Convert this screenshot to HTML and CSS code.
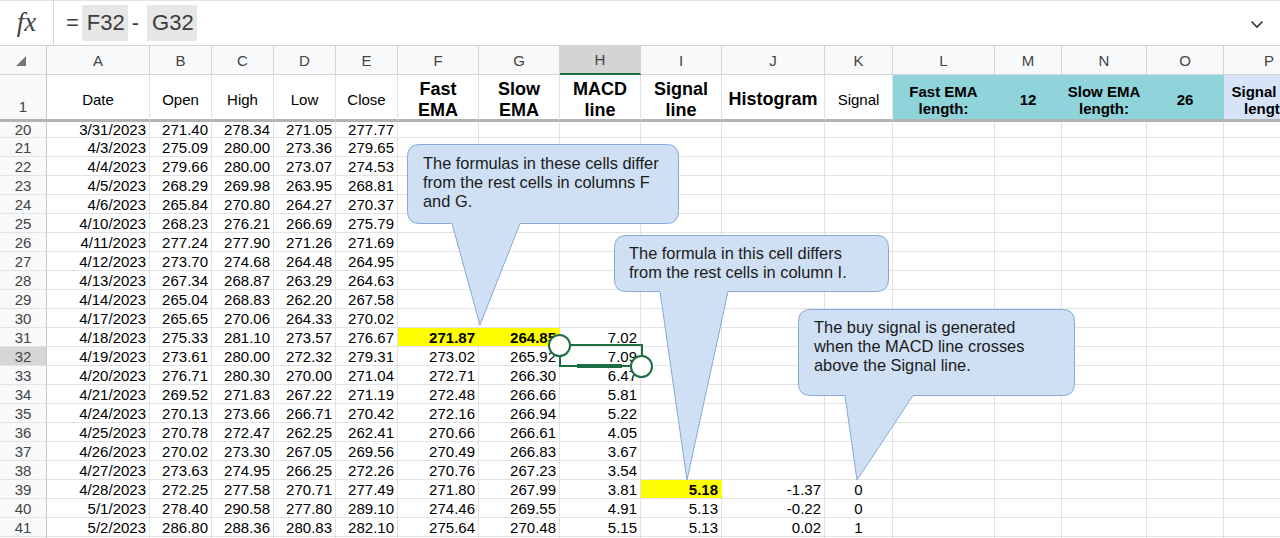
FILE: index.html
```html
<!DOCTYPE html>
<html>
<head>
<meta charset="utf-8">
<link rel="stylesheet" href="styles.css">
</head>
<body>
<div class="fbar">
  <div class="fx">fx</div>
  <div class="formula">
    <span class="eq">=</span><span class="ref">F32</span><span class="op">-</span><span class="ref">G32</span>
  </div>
  <svg class="chev" width="14" height="9" viewBox="0 0 14 9"><polyline points="1.5,1.5 7,7 12.5,1.5" fill="none" stroke="#333" stroke-width="1.6"/></svg>
</div>

<div class="sheet">
  <div class="r hdr"><span class="rn corner"><svg width="10" height="10" viewBox="0 0 10 10"><polygon points="10,0 10,10 0,10" fill="#777"/></svg></span><span>A</span><span>B</span><span>C</span><span>D</span><span>E</span><span>F</span><span>G</span><span class="on">H</span><span>I</span><span>J</span><span>K</span><span>L</span><span>M</span><span>N</span><span>O</span><span>P</span></div>
  <div class="r row1"><span class="rn">1</span><span>Date</span><span>Open</span><span>High</span><span>Low</span><span>Close</span><span class="big">Fast<br>EMA</span><span class="big">Slow<br>EMA</span><span class="big">MACD<br>line</span><span class="big">Signal<br>line</span><span class="big">Histogram</span><span>Signal</span><span class="param teal">Fast EMA<br>length:</span><span class="param teal">12</span><span class="param teal">Slow EMA<br>length:</span><span class="param teal">26</span><span class="param blue">Signal line<br>length:</span></div>
  <div class="r r20"><span class="rn">20</span><span>3/31/2023</span><span>271.40</span><span>278.34</span><span>271.05</span><span>277.77</span><span></span><span></span><span></span><span></span><span></span><span></span><span></span><span></span><span></span><span></span><span></span></div>
  <div class="r"><span class="rn">21</span><span>4/3/2023</span><span>275.09</span><span>280.00</span><span>273.36</span><span>279.65</span><span></span><span></span><span></span><span></span><span></span><span></span><span></span><span></span><span></span><span></span><span></span></div>
  <div class="r"><span class="rn">22</span><span>4/4/2023</span><span>279.66</span><span>280.00</span><span>273.07</span><span>274.53</span><span></span><span></span><span></span><span></span><span></span><span></span><span></span><span></span><span></span><span></span><span></span></div>
  <div class="r"><span class="rn">23</span><span>4/5/2023</span><span>268.29</span><span>269.98</span><span>263.95</span><span>268.81</span><span></span><span></span><span></span><span></span><span></span><span></span><span></span><span></span><span></span><span></span><span></span></div>
  <div class="r"><span class="rn">24</span><span>4/6/2023</span><span>265.84</span><span>270.80</span><span>264.27</span><span>270.37</span><span></span><span></span><span></span><span></span><span></span><span></span><span></span><span></span><span></span><span></span><span></span></div>
  <div class="r"><span class="rn">25</span><span>4/10/2023</span><span>268.23</span><span>276.21</span><span>266.69</span><span>275.79</span><span></span><span></span><span></span><span></span><span></span><span></span><span></span><span></span><span></span><span></span><span></span></div>
  <div class="r"><span class="rn">26</span><span>4/11/2023</span><span>277.24</span><span>277.90</span><span>271.26</span><span>271.69</span><span></span><span></span><span></span><span></span><span></span><span></span><span></span><span></span><span></span><span></span><span></span></div>
  <div class="r"><span class="rn">27</span><span>4/12/2023</span><span>273.70</span><span>274.68</span><span>264.48</span><span>264.95</span><span></span><span></span><span></span><span></span><span></span><span></span><span></span><span></span><span></span><span></span><span></span></div>
  <div class="r"><span class="rn">28</span><span>4/13/2023</span><span>267.34</span><span>268.87</span><span>263.29</span><span>264.63</span><span></span><span></span><span></span><span></span><span></span><span></span><span></span><span></span><span></span><span></span><span></span></div>
  <div class="r"><span class="rn">29</span><span>4/14/2023</span><span>265.04</span><span>268.83</span><span>262.20</span><span>267.58</span><span></span><span></span><span></span><span></span><span></span><span></span><span></span><span></span><span></span><span></span><span></span></div>
  <div class="r"><span class="rn">30</span><span>4/17/2023</span><span>265.65</span><span>270.06</span><span>264.33</span><span>270.02</span><span></span><span></span><span></span><span></span><span></span><span></span><span></span><span></span><span></span><span></span><span></span></div>
  <div class="r"><span class="rn">31</span><span>4/18/2023</span><span>275.33</span><span>281.10</span><span>273.57</span><span>276.67</span><span class="yl">271.87</span><span class="yl">264.85</span><span>7.02</span><span></span><span></span><span></span><span></span><span></span><span></span><span></span><span></span></div>
  <div class="r"><span class="rn on">32</span><span>4/19/2023</span><span>273.61</span><span>280.00</span><span>272.32</span><span>279.31</span><span>273.02</span><span>265.92</span><span>7.09</span><span></span><span></span><span></span><span></span><span></span><span></span><span></span><span></span></div>
  <div class="r"><span class="rn">33</span><span>4/20/2023</span><span>276.71</span><span>280.30</span><span>270.00</span><span>271.04</span><span>272.71</span><span>266.30</span><span>6.47</span><span></span><span></span><span></span><span></span><span></span><span></span><span></span><span></span></div>
  <div class="r"><span class="rn">34</span><span>4/21/2023</span><span>269.52</span><span>271.83</span><span>267.22</span><span>271.19</span><span>272.48</span><span>266.66</span><span>5.81</span><span></span><span></span><span></span><span></span><span></span><span></span><span></span><span></span></div>
  <div class="r"><span class="rn">35</span><span>4/24/2023</span><span>270.13</span><span>273.66</span><span>266.71</span><span>270.42</span><span>272.16</span><span>266.94</span><span>5.22</span><span></span><span></span><span></span><span></span><span></span><span></span><span></span><span></span></div>
  <div class="r"><span class="rn">36</span><span>4/25/2023</span><span>270.78</span><span>272.47</span><span>262.25</span><span>262.41</span><span>270.66</span><span>266.61</span><span>4.05</span><span></span><span></span><span></span><span></span><span></span><span></span><span></span><span></span></div>
  <div class="r"><span class="rn">37</span><span>4/26/2023</span><span>270.02</span><span>273.30</span><span>267.05</span><span>269.56</span><span>270.49</span><span>266.83</span><span>3.67</span><span></span><span></span><span></span><span></span><span></span><span></span><span></span><span></span></div>
  <div class="r"><span class="rn">38</span><span>4/27/2023</span><span>273.63</span><span>274.95</span><span>266.25</span><span>272.26</span><span>270.76</span><span>267.23</span><span>3.54</span><span></span><span></span><span></span><span></span><span></span><span></span><span></span><span></span></div>
  <div class="r"><span class="rn">39</span><span>4/28/2023</span><span>272.25</span><span>277.58</span><span>270.71</span><span>277.49</span><span>271.80</span><span>267.99</span><span>3.81</span><span class="yl">5.18</span><span>-1.37</span><span class="ctr">0</span><span></span><span></span><span></span><span></span><span></span></div>
  <div class="r"><span class="rn">40</span><span>5/1/2023</span><span>278.40</span><span>290.58</span><span>277.80</span><span>289.10</span><span>274.46</span><span>269.55</span><span>4.91</span><span>5.13</span><span>-0.22</span><span class="ctr">0</span><span></span><span></span><span></span><span></span><span></span></div>
  <div class="r"><span class="rn">41</span><span>5/2/2023</span><span>286.80</span><span>288.36</span><span>280.83</span><span>282.10</span><span>275.64</span><span>270.48</span><span>5.15</span><span>5.13</span><span>0.02</span><span class="ctr">1</span><span></span><span></span><span></span><span></span><span></span></div>
  <div class="r"><span class="rn"></span><span></span><span></span><span></span><span></span><span></span><span></span><span></span><span></span><span></span><span></span><span></span><span></span><span></span><span></span><span></span><span></span></div>
</div>

<div class="selection"></div>
<div class="sel-bar"></div>
<div class="handle h1"></div>
<div class="handle h2"></div>

<svg class="bubbles" width="1280" height="538" viewBox="0 0 1280 538">
  <path d="M419.5 144.5 H666.5 Q678.5 144.5 678.5 156.5 V211.5 Q678.5 223.5 666.5 223.5 H520 L480 325 L452 223.5 H419.5 Q407.5 223.5 407.5 211.5 V156.5 Q407.5 144.5 419.5 144.5 Z"/>
  <path d="M626.5 235.5 H876.5 Q888.5 235.5 888.5 247.5 V279.5 Q888.5 291.5 876.5 291.5 H728 L687 480 L660 291.5 H626.5 Q614.5 291.5 614.5 279.5 V247.5 Q614.5 235.5 626.5 235.5 Z"/>
  <path d="M810.5 309.5 H1062.5 Q1074.5 309.5 1074.5 321.5 V383.5 Q1074.5 395.5 1062.5 395.5 H913 L857 480 L845 395.5 H810.5 Q798.5 395.5 798.5 383.5 V321.5 Q798.5 309.5 810.5 309.5 Z"/>
</svg>
<div class="note n1">The formulas in these cells differ<br>from the rest cells in columns F<br>and G.</div>
<div class="note n2">The formula in this cell differs<br>from the rest cells in column I.</div>
<div class="note n3">The buy signal is generated<br>when the MACD line crosses<br>above the Signal line.</div>
</body>
</html>
```
FILE: styles.css
```css
html, body {
  margin: 0;
  padding: 0;
}
body {
  width: 1280px;
  height: 538px;
  overflow: hidden;
  position: relative;
  background: #fff;
  font-family: "Liberation Sans", Arial, sans-serif;
  color: #000;
}

/* formula bar */
.fbar {
  height: 46px;
  box-sizing: border-box;
  border-top: 1px solid #e4e4e4;
  border-bottom: 1px solid #d2d2d2;
  display: flex;
  align-items: center;
}
.fx {
  width: 54px;
  height: 100%;
  box-sizing: border-box;
  border-right: 1px solid #d8d8d8;
  display: flex;
  align-items: center;
  justify-content: center;
  font-family: "Liberation Serif", serif;
  font-style: italic;
  font-size: 27px;
  color: #444;
  padding-bottom: 2px;
}
.formula {
  flex: 1;
  display: flex;
  align-items: center;
  padding-left: 12px;
  font-size: 22px;
  color: #3c3c3c;
}
.ref {
  background: #e6e6e6;
  height: 36px;
  line-height: 36px;
  padding: 0 3px 0 5px;
  margin-left: 3px;
}
.op {
  margin: 0 5px 0 4px;
}
.chev {
  margin-right: 16px;
  margin-top: 2px;
}

/* grid */
.sheet {
  width: 1330px;
}
.r {
  display: grid;
  grid-template-columns: 47px 103px 62px 62px 62px 62px 81px 81px 81px 81px 103px 68px 102px 67px 85px 77px 91px;
  height: 19px;
}
.r > span {
  box-sizing: border-box;
  border-right: 1px solid #e2e2e2;
  border-bottom: 1px solid #e2e2e2;
  display: flex;
  align-items: center;
  justify-content: flex-end;
  padding-right: 3px;
  font-size: 15px;
  line-height: 17px;
  white-space: nowrap;
  overflow: hidden;
  color: #000;
}
.r > span.rn {
  background: #f8f9fa;
  justify-content: center;
  padding: 0;
  color: #444;
  border-right-color: #c8c8c8;
  border-bottom-color: #e4e4e4;
}
.r > span.rn.on {
  background: #d6d6d6;
}

.hdr {
  height: 29px;
}
.hdr > span {
  background: #f8f9fa;
  justify-content: center;
  padding: 0;
  color: #444;
  border-color: #d6d6d6;
}
.hdr > span.on {
  background: #d3d3d3;
  border-bottom: 2px solid #1b6e42;
}
.hdr > span.corner {
  justify-content: flex-end;
  align-items: flex-end;
  padding: 0 20px 8px 0;
  border-bottom-color: #d6d6d6;
}

.row1 {
  height: 47px;
}
.row1 > span {
  border-bottom: 3px solid #b2b2b2;
  justify-content: center;
  text-align: center;
  padding: 5px 0 0;
  line-height: 21px;
}
.row1 > span.rn {
  align-items: flex-end;
  padding: 0 0 2px;
  border-bottom: 3px solid #b2b2b2;
}
.row1 > span.big {
  font-weight: bold;
  font-size: 18px;
}
.row1 > span.param {
  font-weight: bold;
  font-size: 15px;
  line-height: 17px;
}
.row1 > span.teal {
  background: #8fd4da;
  border-right-color: #8fd4da;
}
.row1 > span.blue {
  background: #d7e4f8;
  border-right-color: #d7e4f8;
}

.r20 {
  height: 16px;
}
.r20 > span {
  align-items: flex-end;
  line-height: 15px;
}

.r > span.yl {
  background: #ffff00;
  font-weight: bold;
  border-right-color: #ffff00;
}
.r > span.ctr {
  justify-content: center;
  padding: 0;
}

/* selection (overlay) */
.selection {
  position: absolute;
  left: 559px;
  top: 344px;
  width: 84px;
  height: 23px;
  box-sizing: border-box;
  border: 2px solid #1e6e43;
}
.sel-bar {
  position: absolute;
  left: 577px;
  top: 364px;
  width: 45px;
  height: 4px;
  background: #1e6e43;
}
.handle {
  position: absolute;
  width: 23px;
  height: 23px;
  box-sizing: border-box;
  border: 2px solid #1e6e43;
  border-radius: 50%;
  background: #fff;
}
.h1 {
  left: 548px;
  top: 334px;
}
.h2 {
  left: 630px;
  top: 355px;
}

/* callouts */
.bubbles {
  position: absolute;
  left: 0;
  top: 0;
  pointer-events: none;
}
.bubbles path {
  fill: #cfe0f4;
  stroke: #88a8d6;
  stroke-width: 1;
}
.note {
  position: absolute;
  font-size: 16.4px;
  line-height: 19px;
  color: #1a1a1a;
  white-space: nowrap;
}
.n1 {
  left: 423px;
  top: 154px;
}
.n2 {
  left: 629px;
  top: 244px;
}
.n3 {
  left: 814px;
  top: 318px;
}
```
